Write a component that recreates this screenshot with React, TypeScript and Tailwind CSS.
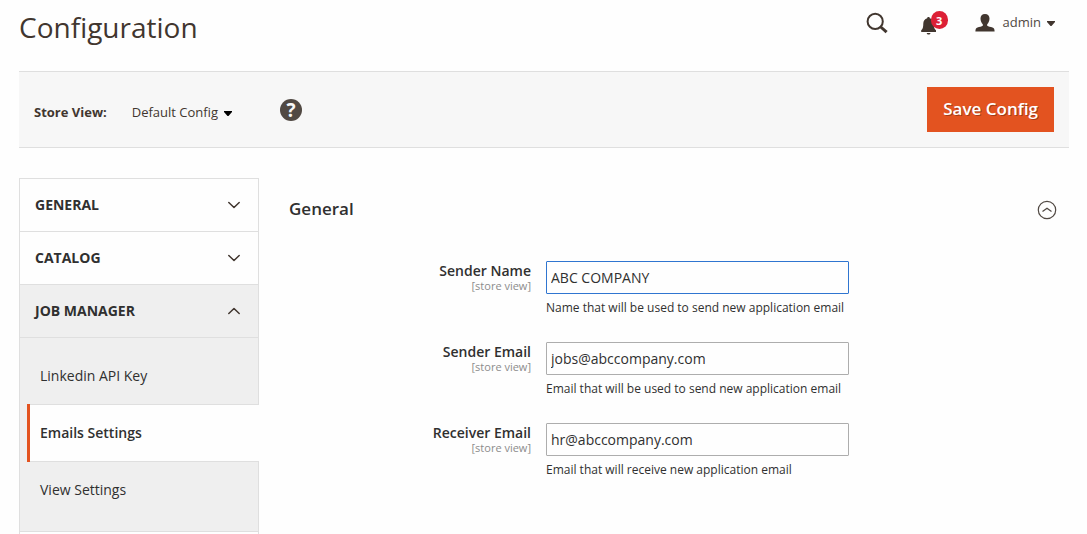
import { useState } from "react";

type Field = { id: string; label: string; value: string; note: string; type: string };

const fields: Field[] = [
  { id: "sender-name", label: "Sender Name", value: "ABC COMPANY", note: "Name that will be used to send new application email", type: "text" },
  { id: "sender-email", label: "Sender Email", value: "jobs@abccompany.com", note: "Email that will be used to send new application email", type: "email" },
  { id: "receiver-email", label: "Receiver Email", value: "hr@abccompany.com", note: "Email that will receive new application email", type: "email" },
];

function Caret({ className }: { className: string }) {
  return (
    <svg className={className} width="8" height="5" viewBox="0 0 8 5" aria-hidden="true">
      <path d="M0 0h8v1L4.5 5h-1L0 1z" fill="currentColor" />
    </svg>
  );
}

function Chevron({ up = false }: { up?: boolean }) {
  return (
    <svg width="14" height="8" viewBox="0 0 14 8" fill="none" stroke="#41362f" strokeWidth="1.5" strokeLinecap="round" strokeLinejoin="round" aria-hidden="true">
      <path d={up ? "M1.8 6.5 7 1.500l5.200 5" : "M1.800 1.500 7 6.500l5.200-5"} />
    </svg>
  );
}

function Header() {
  return (
    <header className="flex h-[71px] items-start justify-between pt-[7px]">
      <h1 className="text-[28px] leading-10 text-[#41362f]">Configuration</h1>
      <div className="mt-0.5 flex h-7 items-center pr-[14px] text-[#41362f]">
        <button type="button" aria-label="Search" className="mr-[33px]">
          <svg className="block" width="22" height="22" viewBox="0 0 22 22" fill="none" stroke="currentColor" aria-hidden="true">
            <circle cx="9.2" cy="9.4" r="7.6" strokeWidth="2" />
            <path d="m14.8 15 5.800 5.200" strokeWidth="3" />
          </svg>
        </button>
        <button type="button" aria-label="Notifications" className="relative mr-9 h-7 w-[18px]">
          <svg className="mt-1.5 block" width="16" height="18" viewBox="0 0 16 18" fill="currentColor" aria-hidden="true">
            <path d="M7.5 0c.8 0 1.3.5 1.3 1.200C11.500 1.800 12.800 4 12.800 6.500c0 4 .7 5.500 2.200 6.700V15H.2v-1.800C1.700 12 2.300 10.500 2.300 6.500c0-2.500 1.400-4.700 3.900-5.300C6.200.5 6.700 0 7.500 0zM5.700 16h3.800c-.2 1-1 1.500-1.900 1.500S5.900 17 5.700 16z" />
          </svg>
          <span className="absolute left-[10px] top-0.5 flex h-[18px] w-[17px] items-center justify-center rounded-full bg-[#dc2036] text-[11px] font-bold leading-none text-white">3</span>
        </button>
        <button type="button" className="flex items-center text-[13px]">
          <svg width="20" height="18" viewBox="0 0 20 18" fill="currentColor" aria-hidden="true">
            <path d="M10 0c2.900 0 4.500 1.800 4.500 4.500 0 2.400-1 4.600-2.300 5.800v1.500c1 .9 3.400 1.100 5.300 1.800 1.500.5 2.100 1.600 2.100 3.900H.4c0-2.300.6-3.400 2.100-3.900 1.900-.7 4.300-.9 5.300-1.800v-1.500C6.500 9.100 5.500 6.900 5.500 4.500 5.500 1.800 7.100 0 10 0z" />
          </svg>
          <span className="ml-2 mr-1.5 text-[#514943]">admin</span>
          <Caret className="mt-px" />
        </button>
      </div>
    </header>
  );
}

function Toolbar() {
  return (
    <div className="flex h-[77px] items-center border-y border-[#dfdfdf] bg-[#f7f7f7] px-[15px] text-[13px]">
      <span id="store-label" className="mt-1.5 font-bold text-[#41362f]">Store View:</span>
      <button type="button" aria-labelledby="store-label store-value" className="ml-[25px] mt-1.5 flex items-center text-[#41362f]">
        <span id="store-value">Default Config</span>
        <Caret className="ml-1.5 mt-px text-black" />
      </button>
      <button type="button" aria-label="Help" className="ml-12 mt-px flex size-[22px] items-center justify-center rounded-full bg-[#514943] text-[19px] font-bold leading-none text-[#f7f7f7]">
        ?
      </button>
      <button type="button" className="ml-auto h-[45px] bg-[#e35320] px-4 pb-0.5 text-[17px] font-semibold text-white [text-shadow:1px_1px_0_rgba(0,0,0,0.3)]">
        Save Config
      </button>
    </div>
  );
}

function Section({ title, open = false }: { title: string; open?: boolean }) {
  return (
    <button
      type="button"
      aria-expanded={open}
      className={`flex h-[53px] w-full items-center justify-between border-b border-[#dfdfdf] pl-[15px] pr-[17px] text-[14px] font-bold text-[#303030] ${open ? "bg-[#efefef]" : ""}`}
    >
      <span className="pb-0.5">{title}</span>
      <Chevron up={open} />
    </button>
  );
}

function Sidebar() {
  return (
    <nav aria-label="Configuration sections" className="flex w-60 shrink-0 flex-col border border-b-0 border-[#dfdfdf] text-[14px] text-[#303030]">
      <Section title="GENERAL" />
      <Section title="CATALOG" />
      <Section title="JOB MANAGER" open />
      <ul className="border-b border-[#dfdfdf] bg-[#efefef] pb-3 pt-[9px]">
        <li>
          <a href="#linkedin" className="flex h-[57px] items-center pl-5">Linkedin API Key</a>
        </li>
        <li className="-mr-px ml-[7px] border-l-[3px] border-[#e35320]">
          <a href="#emails" aria-current="page" className="flex h-[58px] items-center border-y border-[#dfdfdf] bg-[#fefefe] pb-0.5 pl-[10px] font-semibold">Emails Settings</a>
        </li>
        <li>
          <a href="#view" className="flex h-[57px] items-center pb-0.5 pl-5">View Settings</a>
        </li>
      </ul>
    </nav>
  );
}

function FieldRow({ field }: { field: Field }) {
  const [value, setValue] = useState(field.value);
  return (
    <div className="grid grid-cols-[242fr_303fr_205fr] gap-x-[15px]">
      <label htmlFor={field.id} className="block text-right text-[14px] font-semibold leading-[19px] text-[#303030]">
        {field.label}
        <span className="block text-[11px] font-normal leading-3 text-[#8c8c8c]">[store view]</span>
      </label>
      <div>
        <input
          id={field.id}
          type={field.type}
          value={value}
          onChange={(e) => setValue(e.target.value)}
          className={`block h-[33px] w-full rounded-[1px] border px-1 text-[14px] text-[#303030] outline-none focus:border-[#007bdb] ${field.id === "sender-name" ? "border-[#2f75d0]" : "border-[#adadad]"}`}
        />
        <p className="mt-1 text-[12px] leading-5 text-[#303030]">{field.note}</p>
      </div>
    </div>
  );
}

export default function App() {
  return (
    <div className="flex min-h-screen flex-col bg-[#fefefe] pl-[19px] pr-[18px] font-['Open_Sans',sans-serif]">
      <Header />
      <Toolbar />
      <div className="flex flex-1 items-stretch gap-[30px] pt-[30px]">
        <Sidebar />
        <main className="min-w-0 flex-1">
          <div className="flex h-[63px] items-center justify-between pr-3">
            <h2 className="pb-0.5 text-[17px] font-semibold text-[#303030]">General</h2>
            <button type="button" aria-label="Collapse General" aria-expanded="true">
              <svg className="block" width="20" height="20" viewBox="0 0 20 20" fill="none" stroke="#514943" aria-hidden="true">
                <circle cx="10" cy="10" r="8.7" strokeWidth="1.2" />
                <path d="M5.500 11.500 10 8.200l4.500 3.300" strokeWidth="1.300" />
              </svg>
            </button>
          </div>
          <form className="flex flex-col gap-6 pt-5">
            {fields.map((field) => (
              <FieldRow key={field.id} field={field} />
            ))}
          </form>
        </main>
      </div>
    </div>
  );
}
